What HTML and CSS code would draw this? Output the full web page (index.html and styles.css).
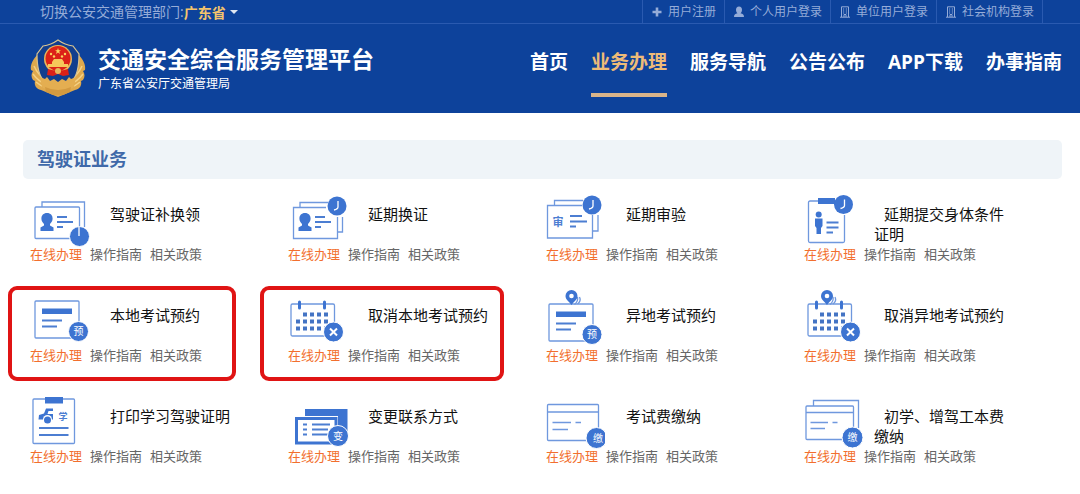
FILE: index.html
```html
<!DOCTYPE html>
<html lang="zh-CN">
<head>
    <meta charset="UTF-8">
    <meta name="viewport" content="width=device-width, initial-scale=1.0">
    <title>交通安全综合服务管理平台</title>
    <link rel="stylesheet" href="styles.css">
</head>
<body>

<!-- formes communes -->
<svg class="defs" width="0" height="0" aria-hidden="true">
    <defs>
        <g id="clock">
            <circle r="9.5" class="fill"/>
            <path d="M1 -5V1Q1 3 -3 4" class="white-line"/>
        </g>
        <g id="person">
            <path d="M0 -6C3.600 -6 5.600 -3.600 5.600 -.4C5.600 2 4.500 3.600 3 5V6.500L6.500 8.500V12H-6.500V8.500L-3 6.500V5C-4.500 3.600 -5.600 2 -5.600 -.4C-5.600 -3.600 -3.600 -6 0 -6Z" class="fill"/>
            <path d="M10 -2H20M10 3H26M10 8H16" class="bar"/>
        </g>
        <g id="form">
            <rect x="5" y="11" width="44" height="37" rx="1" class="card"/>
            <path d="M12 18.500H42V24H12Z" class="fill"/>
            <path d="M12 30.500H32M12 36.500H27" class="bar"/>
        </g>
        <g id="calendar">
            <rect x="3" y="14" width="43.500" height="32" rx="1.500" class="card"/>
            <path d="M11.500 12V18M36.500 12V18" class="tab"/>
            <path d="M15 24.500H41M8 31.500H41M8 38.500H41" class="dots"/>
            <circle cx="45.500" cy="42" r="10" class="badge"/>
            <path d="M42 38.500L49 45.500M49 38.500L42 45.500" class="cross"/>
        </g>
        <g id="pin">
            <path d="M6 8Q10 5 8 1M3 8.500Q7 5 6 1" class="line"/>
            <path d="M0 -6A6 6 0 0 1 6 0C6 3.500 2.500 5.500 0 9C-2.500 5.500 -6 3.500 -6 0A6 6 0 0 1 0 -6Z" class="fill"/>
            <circle r="2.300" fill="#fff"/>
        </g>
    </defs>
</svg>

<header>
    <div class="topbar">
        <div class="region">
            <label for="province">切换公安交通管理部门:</label>
            <select id="province">
                <option>广东省</option>
            </select>
        </div>
        <div class="login">
            <a href="#"><svg width="10" height="12" viewBox="0 0 10 12"><path d="M5 1.500V10.500M.5 6H9.500" fill="none" stroke="currentColor" stroke-width="2.600"/></svg>用户注册</a>
            <a href="#"><svg width="10" height="12" viewBox="0 0 10 12"><path d="M5 .5C7 .5 8 2 8 3.800C8 5.500 7.200 6.800 6.500 7.300C9 7.800 10 8.800 10 11H0C0 8.800 1 7.800 3.500 7.300C2.800 6.800 2 5.500 2 3.800C2 2 3 .5 5 .5Z" fill="currentColor"/></svg>个人用户登录</a>
            <a href="#"><svg width="10" height="12" viewBox="0 0 10 12"><path d="M1.500 11V.8H8.500V11M0 11.200H10M4 11V8.500H6V11M3 3H4.200M5.800 3H7M3 5H4.200M5.800 5H7M3 7H4.200M5.800 7H7" fill="none" stroke="currentColor"/></svg>单位用户登录</a>
            <a href="#"><svg width="10" height="12" viewBox="0 0 10 12"><path d="M1.500 11V.8H8.500V11M0 11.200H10M4 11V8.500H6V11M3 3H4.200M5.800 3H7M3 5H4.200M5.800 5H7M3 7H4.200M5.800 7H7" fill="none" stroke="currentColor"/></svg>社会机构登录</a>
        </div>
    </div>
    <div class="banner">
        <div class="brand">
            <svg class="emblem" width="56" height="60" viewBox="0 0 56 60">
                <!-- ailes -->
                <path d="M8 15C3 20 0 26 1 31L3 32C1 35 1 38 3 41L5 42C4 46 6 50 11 51L28 58L45 51C50 50 52 46 51 42L53 41C55 38 55 35 53 32L55 31C56 26 53 20 48 15L44 40L28 45L12 40Z" fill="#dfa94d"/>
                <path d="M4 27Q8 36 16 41M3 35Q8 42 17 46M52 27Q48 36 40 41M53 35Q48 42 39 46M6 43Q14 50 28 51M50 43Q42 50 28 51" fill="none" stroke="#f5d184" stroke-width="1.500"/>
                <!-- bouclier -->
                <path d="M28 1Q21 6 13 7L7 15Q7 35 14 42L28 49L42 42Q49 35 49 15L43 7Q35 6 28 1Z" fill="#123e8e" stroke="#d9c491" stroke-width="1.200"/>
                <path d="M10 38L15 40L17 38L20 42L24 40L28 43L32 40L36 42L39 38L41 40L46 38L44 48L28 57L12 48Z" fill="#e4ae51"/>
                <path d="M15 48Q28 54 41 48L40 53Q28 60 16 53Z" fill="#d39a40"/>
                <circle cx="28" cy="20" r="14" fill="#e9b75b"/>
                <circle cx="28" cy="19.500" r="12.500" fill="#dc2118"/>
                <path d="M28 9L28.800 11.200L31 11.200L29.200 12.600L30 15L28 13.500L26 15L26.800 12.600L25 11.200L27.200 11.200Z" fill="#fbd55e"/>
                <g fill="#fbd55e"><circle cx="21" cy="15" r="1.200"/><circle cx="24" cy="17.500" r="1.200"/><circle cx="32" cy="17.500" r="1.200"/><circle cx="35" cy="15" r="1.200"/></g>
                <path d="M22 23L24 20H32L34 23V26H22ZM18 25H38V28H18Z" fill="#f6c75a"/>
                <path d="M18 30Q28 33 38 30L39 36L33 37L28 35L23 37L17 36Z" fill="#dc2118"/>
                <circle cx="28" cy="32" r="3" fill="#e9b75b"/>
            </svg>
            <div>
                <h1>交通安全综合服务管理平台</h1>
                <p>广东省公安厅交通管理局</p>
            </div>
        </div>
        <nav>
            <a href="#">首页</a>
            <a href="#" class="active">业务办理</a>
            <a href="#">服务导航</a>
            <a href="#">公告公布</a>
            <a href="#">APP下载</a>
            <a href="#">办事指南</a>
        </nav>
    </div>
</header>

<main>
    <h2>驾驶证业务</h2>
    <div class="services">
        <div class="item">
            <div class="info">
                <svg class="icon" viewBox="0 0 60 56">
                    <path d="M12 18V13H54.500V38" class="card"/>
                    <rect x="5" y="18" width="44.500" height="31.500" rx="1" class="card"/>
                    <use href="#person" x="17" y="30"/>
                    <circle cx="49.500" cy="47.500" r="10" class="badge"/>
                    <path d="M49 47V38" class="white-line"/>
                </svg>
                <h3>驾驶证补换领</h3>
            </div>
            <div class="links"><a href="#" class="online">在线办理</a><a href="#">操作指南</a><a href="#">相关政策</a></div>
        </div>
        <div class="item">
            <div class="info">
                <svg class="icon" viewBox="0 0 60 56">
                    <path d="M12 18V13.500H40M54.500 28V43H50" class="card"/>
                    <path d="M38 18.500H5.500V49.500H49.500V28" class="card"/>
                    <use href="#person" x="17" y="30"/>
                    <use href="#clock" x="49" y="17"/>
                </svg>
                <h3>延期换证</h3>
            </div>
            <div class="links"><a href="#" class="online">在线办理</a><a href="#">操作指南</a><a href="#">相关政策</a></div>
        </div>
        <div class="item">
            <div class="info">
                <svg class="icon" viewBox="0 0 60 56">
                    <path d="M8.500 16V11.500H37M52 26V42H47" class="card"/>
                    <path d="M36 16.500H1.500V49H46.500V26" class="card"/>
                    <text x="12" y="37" class="glyph">审</text>
                    <path d="M24 27H36M24 32.500H41M24 37.500H30" class="bar"/>
                    <use href="#clock" x="46" y="16"/>
                </svg>
                <h3>延期审验</h3>
            </div>
            <div class="links"><a href="#" class="online">在线办理</a><a href="#">操作指南</a><a href="#">相关政策</a></div>
        </div>
        <div class="item">
            <div class="info">
                <svg class="icon" viewBox="0 0 60 56">
                    <path d="M30 12H6Q4.500 12 4.500 13.500V52Q4.500 53.500 6 53.500H39Q40.500 53.500 40.500 52V26" class="card"/>
                    <path d="M14 9H31V15H14Z" class="fill"/>
                    <circle cx="14.700" cy="25.500" r="3" class="fill"/>
                    <path d="M11 29.500H18.500V37L17 39V45H12.500V39L11 37Z" class="fill"/>
                    <path d="M22.500 33.500H34.500M22.500 38.500H34.500M22.500 43.500H29" class="bar"/>
                    <use href="#clock" x="39.500" y="15.500"/>
                </svg>
                <h3>延期提交身体条件证明</h3>
            </div>
            <div class="links"><a href="#" class="online">在线办理</a><a href="#">操作指南</a><a href="#">相关政策</a></div>
        </div>

        <div class="item mark local">
            <div class="info">
                <svg class="icon" viewBox="0 0 60 56">
                    <use href="#form"/>
                    <circle cx="48.500" cy="41.500" r="10" class="badge"/>
                    <text x="48.500" y="45" class="badge-text">预</text>
                </svg>
                <h3>本地考试预约</h3>
            </div>
            <div class="links"><a href="#" class="online">在线办理</a><a href="#">操作指南</a><a href="#">相关政策</a></div>
        </div>
        <div class="item mark cancel">
            <div class="info">
                <svg class="icon" viewBox="0 0 60 56">
                    <use href="#calendar"/>
                </svg>
                <h3>取消本地考试预约</h3>
            </div>
            <div class="links"><a href="#" class="online">在线办理</a><a href="#">操作指南</a><a href="#">相关政策</a></div>
        </div>
        <div class="item">
            <div class="info">
                <svg class="icon" viewBox="0 0 60 56">
                    <use href="#form" x="-2" y="3"/>
                    <use href="#pin" x="25.500" y="6"/>
                    <circle cx="46" cy="44.500" r="10" class="badge"/>
                    <text x="46" y="48" class="badge-text">预</text>
                </svg>
                <h3>异地考试预约</h3>
            </div>
            <div class="links"><a href="#" class="online">在线办理</a><a href="#">操作指南</a><a href="#">相关政策</a></div>
        </div>
        <div class="item">
            <div class="info">
                <svg class="icon" viewBox="0 0 60 56">
                    <use href="#calendar" x="1"/>
                    <use href="#pin" x="23" y="6"/>
                </svg>
                <h3>取消异地考试预约</h3>
            </div>
            <div class="links"><a href="#" class="online">在线办理</a><a href="#">操作指南</a><a href="#">相关政策</a></div>
        </div>

        <div class="item">
            <div class="info">
                <svg class="icon" viewBox="0 0 60 56">
                    <rect x="3" y="8" width="41.500" height="44.500" rx="1" class="card"/>
                    <path d="M15 6H33V12.500H15Z" class="fill"/>
                    <path d="M9 24L14 22.500L16 17.500H23V20H18.500L17.500 23H23V28.500H8.500Z" class="fill"/>
                    <circle cx="17.500" cy="28.500" r="4.500" fill="#fff"/>
                    <circle cx="17.500" cy="29" r="3.500" class="fill"/>
                    <text x="33" y="29" class="glyph small">学</text>
                    <path d="M9 37H38.500M9 44H38.500" class="bar"/>
                </svg>
                <h3>打印学习驾驶证明</h3>
            </div>
            <div class="links"><a href="#" class="online">在线办理</a><a href="#">操作指南</a><a href="#">相关政策</a></div>
        </div>
        <div class="item">
            <div class="info">
                <svg class="icon" viewBox="0 0 60 56">
                    <path d="M17 18H59.500V46H17Z" class="fill"/>
                    <path d="M6 25H50V54H6Z" fill="#fff"/>
                    <path d="M8.500 27.500H48V52H8.500Z" class="frame"/>
                    <path d="M15 33.500H19M15 38.500H19M15 43.500H19M24 33.500H42M24 38.500H40M24 43.500H40" class="bar"/>
                    <circle cx="50" cy="45" r="10.500" class="badge"/>
                    <text x="50" y="48.500" class="badge-text">变</text>
                </svg>
                <h3>变更联系方式</h3>
            </div>
            <div class="links"><a href="#" class="online">在线办理</a><a href="#">操作指南</a><a href="#">相关政策</a></div>
        </div>
        <div class="item">
            <div class="info">
                <svg class="icon" viewBox="0 0 60 56">
                    <clipPath id="edge"><path d="M0 0H59V60H0Z"/></clipPath>
                    <rect x="1.500" y="13.500" width="51" height="36" rx="1" class="card"/>
                    <path d="M1.500 21H52.500M6.500 31.500H25M29.500 31.500H35M6.500 38.500H22" class="line"/>
                    <g clip-path="url(#edge)">
                        <circle cx="50.500" cy="47" r="10.500" class="badge"/>
                        <text x="52" y="50.500" class="badge-text">缴</text>
                    </g>
                </svg>
                <h3>考试费缴纳</h3>
            </div>
            <div class="links"><a href="#" class="online">在线办理</a><a href="#">操作指南</a><a href="#">相关政策</a></div>
        </div>
        <div class="item">
            <div class="info">
                <svg class="icon" viewBox="0 0 60 56">
                    <path d="M9.500 15V9.500H54.500V37" class="card"/>
                    <rect x="2" y="15" width="47.500" height="33.500" rx="1" class="card"/>
                    <path d="M2 21.500H49.500M6.500 31.500H24M28.500 31.500H33.500M6.500 37.500H21" class="line"/>
                    <circle cx="48.500" cy="46.500" r="10.500" class="badge"/>
                    <text x="48.500" y="50" class="badge-text">缴</text>
                </svg>
                <h3>初学、增驾工本费缴纳</h3>
            </div>
            <div class="links"><a href="#" class="online">在线办理</a><a href="#">操作指南</a><a href="#">相关政策</a></div>
        </div>
    </div>
</main>

</body>
</html>
```
FILE: styles.css
```css
* {
    box-sizing: border-box;
}

body {
    margin: 0;
    font-family: "Open Sans", "Noto Sans CJK SC", sans-serif;
    background-color: #ffffff;
    color: #111111;
}

a {
    color: inherit;
    text-decoration: none;
}

h1, h2, h3, p {
    margin: 0;
}

.defs {
    position: absolute;
}

/* HEADER */
header {
    background-color: #0d429b;
    color: #ffffff;
}

.topbar {
    display: flex;
    justify-content: space-between;
    height: 24px;
    padding: 0 37px 0 40px;
    border-bottom: 1px solid #2a5ab0;
    color: #95acd8;
    line-height: 23px;
}

.region {
    display: flex;
    align-items: center;
    font-size: 14px;
}

.region::after {
    content: "";
    margin-left: 4px;
    border: 4px solid transparent;
    border-top-color: #dfe6f2;
    border-bottom: 0;
}

#province {
    appearance: none;
    padding: 0;
    border: 0;
    background: none;
    color: #f4c46c;
    font: bold 14px/22px "Noto Sans CJK SC", sans-serif;
    cursor: pointer;
}

.login {
    display: flex;
    font-size: 12px;
}

.login a {
    display: flex;
    align-items: center;
    gap: 6px;
    padding: 0 8px 0 9px;
    border-left: 1px solid #2a5ab0;
}

.login a:last-child {
    border-right: 1px solid #2a5ab0;
}

.banner {
    display: flex;
    justify-content: space-between;
    height: 89px;
    padding: 0 18px 0 30px;
}

.brand {
    display: flex;
    align-items: center;
    gap: 12px;
}

h1 {
    font-size: 23px;
    line-height: 30px;
}

.brand p {
    font-size: 12px;
    line-height: 20px;
}

nav {
    display: flex;
    gap: 23px;
    padding-top: 24px;
    font-size: 19px;
    font-weight: bold;
    line-height: 28px;
}

nav a {
    height: 49px;
}

nav .active {
    color: #eebb78;
    border-bottom: 4px solid #d9b48a;
}

/* SERVICES */
main {
    padding: 27px 18px 20px 23px;
}

h2 {
    padding: 0 14px;
    border-radius: 5px;
    background-color: #eff4f8;
    color: #3f69a9;
    font-size: 18px;
    line-height: 39px;
}

.services {
    display: grid;
    grid-template-columns: repeat(4, 1fr);
    row-gap: 26px;
    padding: 10px 0 0 7px;
}

.item {
    position: relative;
}

.info {
    display: flex;
    gap: 10px;
    height: 55px;
}

h3 {
    width: 136px;
    padding-top: 15px;
    text-indent: 10px;
    font-size: 15px;
    font-weight: normal;
    line-height: 20px;
}

.links {
    display: flex;
    gap: 8px;
    color: #666666;
    font-size: 13px;
    line-height: 20px;
}

.links .online {
    color: #f26f2e;
}

/* cadre rouge autour des rendez-vous */
.mark::after {
    content: "";
    position: absolute;
    top: -4px;
    bottom: -16px;
    border: 4px solid #e01414;
    border-radius: 9px;
    pointer-events: none;
}

.local::after {
    left: -22px;
    right: 52px;
}

.cancel::after {
    left: -28px;
    right: 42px;
}

/* ICONS */
.icon {
    flex: none;
    width: 60px;
    height: 56px;
    overflow: visible;
}

.card, .line {
    fill: none;
    stroke: #6f98de;
    stroke-width: 1.3px;
}

.fill {
    fill: #3d74d1;
}

.bar {
    fill: none;
    stroke: #4c7ed2;
    stroke-width: 2px;
}

.tab {
    stroke: #3d74d1;
    stroke-width: 3px;
    stroke-linecap: round;
}

.dots {
    stroke: #4474c4;
    stroke-width: 4px;
    stroke-dasharray: 4px 3px;
}

.frame {
    fill: #ffffff;
    stroke: #3d74d1;
    stroke-width: 3px;
}

.badge {
    fill: #3d74d1;
    stroke: #ffffff;
    stroke-width: 1px;
}

.white-line {
    fill: none;
    stroke: #ffffff;
    stroke-width: 1.3px;
}

.cross {
    stroke: #ffffff;
    stroke-width: 2px;
}

.glyph, .badge-text {
    font-size: 11px;
    font-weight: bold;
    text-anchor: middle;
    fill: #4c7ed2;
}

.small {
    font-size: 9px;
}

.badge-text {
    font-size: 10px;
    font-weight: normal;
    fill: #ffffff;
}
```
